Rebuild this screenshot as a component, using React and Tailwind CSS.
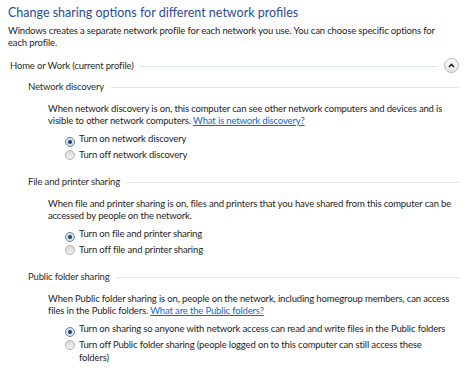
import React from "react";

function Radio({ checked }) {
    return (
        <span
            className={`inline-flex items-center justify-center w-[10px] h-[10px] rounded-full border shrink-0 ${
                checked ? "border-[#6f8296] bg-[#d5e3f1]" : "border-[#b0b0b0] bg-gradient-to-b from-[#d8d8d8] to-[#f2f2f2]"
            }`}
        >
            {checked && <span className="w-[4px] h-[4px] rounded-full bg-[#1d3f6e]" />}
        </span>
    );
}

function Option({ checked, children }) {
    return (
        <div className="flex items-start gap-[4px] pl-[65px] pr-[25px] leading-[13px]">
            <span className="pt-[2px]">
                <Radio checked={checked} />
            </span>
            <span>{children}</span>
        </div>
    );
}

function Section({ title, text, link, options }) {
    return (
        <div>
            <div className="flex items-center gap-[7px] pl-[28px] pr-[15px] leading-[13px]">
                <span className="text-[#2b2b2b]">{title}</span>
                <span className="flex-1 h-px bg-[#dde2e6] mt-[2px]" />
            </div>
            <p className="pl-[48px] pr-[18px] mt-[10px] leading-[12px]">
                {text}
                {link && (
                    <>
                        {" "}
                        <a className="text-[#0a6bd1] underline">{link}</a>
                    </>
                )}
            </p>
            <div className="mt-[5px] space-y-[1px]">
                {options.map((o, i) => (
                    <Option key={i} checked={i === 0}>
                        {o}
                    </Option>
                ))}
            </div>
        </div>
    );
}

export default function App() {
    return (
        <div
            className="w-[474px] h-[373px] bg-white overflow-hidden text-[9.5px] tracking-[-0.15px] leading-[12px] text-[#1e1e1e]"
            style={{ fontFamily: 'Lato, "Open Sans", sans-serif' }}
        >
            <h1 className="pl-[8px] pt-[3px] text-[12.5px] tracking-normal leading-[19px] text-[#2a4b9b]">
                Change sharing options for different network profiles
            </h1>
            <p className="pl-[8px] pr-[28px] mt-[3px]">
                Windows creates a separate network profile for each network you use. You can choose specific options for each profile.
            </p>

            <div className="flex items-center gap-[6px] pl-[10px] pr-[15px] mt-[9px] leading-[13px]">
                <span className="text-[#2b2b2b]">Home or Work (current profile)</span>
                <span className="flex-1 h-px bg-[#dde2e6] mt-[2px]" />
                <span className="w-[15px] h-[15px] rounded-full border border-[#b9b9b9] bg-gradient-to-b from-white to-[#e2e2e2] flex items-center justify-center">
                    <svg width="7" height="5" viewBox="0 0 7 5">
                        <path d="M1 4 L3.5 1.5 L6 4" fill="none" stroke="#222" strokeWidth="1.6" />
                    </svg>
                </span>
            </div>

            <div className="mt-[7px] space-y-[12px]">
                <Section
                    title="Network discovery"
                    text="When network discovery is on, this computer can see other network computers and devices and is visible to other network computers."
                    link="What is network discovery?"
                    options={["Turn on network discovery", "Turn off network discovery"]}
                />
                <Section
                    title="File and printer sharing"
                    text="When file and printer sharing is on, files and printers that you have shared from this computer can be accessed by people on the network."
                    options={["Turn on file and printer sharing", "Turn off file and printer sharing"]}
                />
                <Section
                    title="Public folder sharing"
                    text="When Public folder sharing is on, people on the network, including homegroup members, can access files in the Public folders."
                    link="What are the Public folders?"
                    options={[
                        "Turn on sharing so anyone with network access can read and write files in the Public folders",
                        "Turn off Public folder sharing (people logged on to this computer can still access these folders)",
                    ]}
                />
            </div>
        </div>
    );
}
